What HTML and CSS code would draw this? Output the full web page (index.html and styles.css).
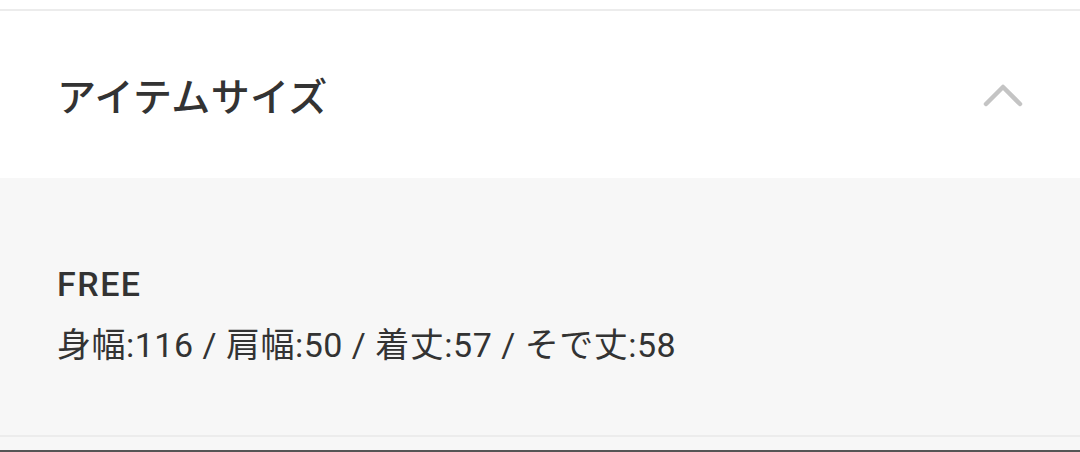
FILE: index.html
```html
<!DOCTYPE html>
<html lang="ja">
<head>
<meta charset="utf-8">
<link rel="stylesheet" href="styles.css">
</head>
<body>
<div class="page">
  <div class="prev"></div>
  <section class="accordion">
    <div class="acc-header">
      <h2 class="acc-title">アイテムサイズ</h2>
      <svg class="chevron" width="40" height="28" viewBox="0 0 40 28">
        <polyline points="3,23 20,6 37,23" fill="none" stroke="#c4c4c4" stroke-width="4.5" stroke-linecap="round" stroke-linejoin="round"/>
      </svg>
    </div>
    <div class="acc-body">
      <div class="size-name">FREE</div>
      <div class="size-detail">身幅:116 / 肩幅:50 / 着丈:57 / そで丈:58</div>
    </div>
  </section>
  <div class="after"></div>
  <div class="bottom-bar"></div>
</div>
</body>
</html>
```
FILE: styles.css
```css
html, body {
  margin: 0;
  padding: 0;
  background: #ffffff;
}
body {
  font-family: Roboto, "Noto Sans CJK JP", sans-serif;
  color: #333333;
}
.page {
  width: 1080px;
  height: 452px;
  overflow: hidden;
  display: flex;
  flex-direction: column;
}
.prev {
  height: 9px;
  background: #ffffff;
}
.accordion {
  border-top: 2px solid #ececec;
  border-bottom: 2px solid #ececec;
}
.acc-header {
  height: 167px;
  padding: 0 57px 0 57px;
  display: flex;
  align-items: center;
  justify-content: space-between;
  background: #ffffff;
}
.acc-title {
  margin: 0;
  font-family: "Noto Sans CJK JP", sans-serif;
  font-size: 39px;
  font-weight: 500;
  letter-spacing: 0.4px;
  color: #333333;
  line-height: 1;
}
.chevron {
  display: block;
}
.acc-body {
  height: 257px;
  box-sizing: border-box;
  background: #f7f7f7;
  padding: 84px 57px 0 57px;
}
.size-name {
  font-size: 34px;
  font-weight: 500;
  letter-spacing: 1.5px;
  line-height: 44px;
  color: #333333;
}
.size-detail {
  margin-top: 17px;
  font-size: 34px;
  font-weight: 400;
  letter-spacing: 0.5px;
  line-height: 44px;
  color: #333333;
}
.after {
  height: 13px;
  background: #f7f7f7;
}
.bottom-bar {
  height: 2px;
  background: #555555;
}
```
